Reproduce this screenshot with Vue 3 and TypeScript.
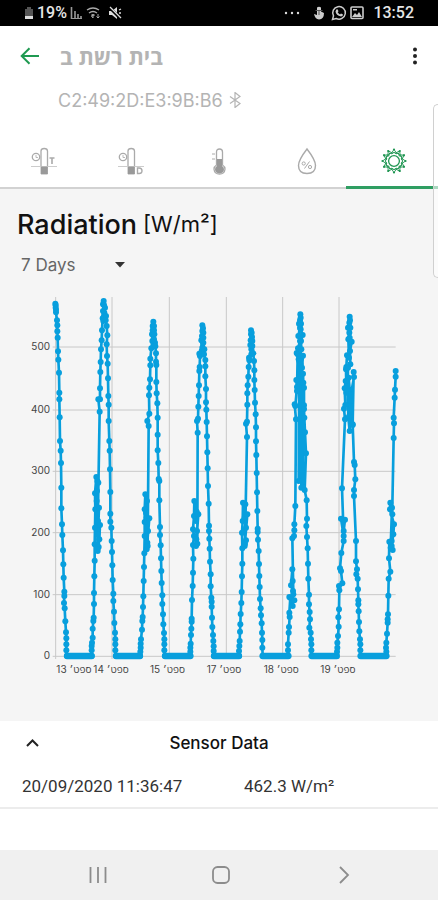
<script setup lang="ts">
import { ref } from 'vue'

type Point = [number, number]

const range = ref('7 Days')
const expanded = ref(true)

const yTicks = [
  { label: '500', y: 168 },
  { label: '400', y: 357 },
  { label: '300', y: 541 },
  { label: '200', y: 725 },
  { label: '100', y: 911 },
  { label: '0', y: 1096 },
]

const xGrid = [167, 336, 508, 679, 848, 1017]

const xTicks = [
  { label: '13 ספט׳', x: 169 },
  { label: '14 ספט׳', x: 280 },
  { label: '15 ספט׳', x: 450 },
  { label: '17 ספט׳', x: 620 },
  { label: '18 ספט׳', x: 791 },
  { label: '19 ספט׳', x: 961 },
]

// Each stretch of readings is kept relative to its own origin on the plot.
function trace(ox: number, oy: number, text: string): Point[] {
  return text.split(' ').map((pair) => {
    const [x, y] = pair.split(',').map(Number)
    return [x + ox, y + oy]
  })
}

const points: Point[] = [
  // 13 Sep
  ...trace(60, 0, '106,38 107,43 107,50 108,56 108,64 111,88 112,103 112,121 113,140 114,181 115,206 117,245 118,305 118,325 119,379 120,450 122,479 123,516 124,590'),
  ...trace(60, 570, '124,82 126,130 127,162 129,208 130,250 131,290 133,332 133,345 132,366 134,382 136,421 138,454 139,472 139,490 139,508 141,525'),
  // 14 Sep
  ...trace(60, 570, '215,525 215,508 215,495 216,485 218,470 218,443 220,420 221,410 222,369 222,336 223,286 224,239 224,190 225,140 226,85 225,37 229,-12 232,0 230,60 234,120 233,210 238,175 240,132 236,198 231,30 235,5 232,160 237,80 232,205'),
  ...trace(60, 0, '239,362 235,325 240,325 240,292 241,243 242,213 243,175 245,148 246,118 248,82 250,90 249,60 252,75 249,40 251,30 252,42 255,50 253,65 258,75 257,88 260,105 262,133 260,160 261,195 263,218 264,262 265,315 266,341 266,390 268,450 269,479 270,535'),
  ...trace(60, 570, '271,33 271,98 271,122 274,140 275,180 276,213 277,253 278,297 280,338 280,360 282,392 283,426 285,455 286,475 286,490 286,508 288,525'),
  // 15 Sep
  ...trace(60, 570, '360,525 361,512 362,500 362,488 363,475 366,446 367,420 368,408 369,378 370,346 371,300 372,258 373,217 374,165 374,123 374,85 376,40 381,60 380,110 388,112 380,205 384,150 382,185 378,95 383,195'),
  ...trace(60, 0, '386,405 382,390 388,368 387,313 388,290 390,265 391,223 391,203 394,172 397,150 396,130 398,118 398,105 400,92 402,105 402,118 403,130 402,145 405,155 406,166 408,187 408,212 409,222 409,273 410,307 412,337 413,380 413,431 413,478 415,516 416,564'),
  ...trace(60, 570, '418,0 418,58 420,138 420,162 422,193 423,232 424,270 425,306 427,343 427,369 429,400 430,430 432,456 433,475 433,490 433,508 435,525'),
  // 16 Sep
  ...trace(60, 570, '511,525 511,512 511,500 512,488 513,462 514,443 515,422 515,413 516,357 518,315 519,275 520,233 519,192 522,165 519,145 522,105 523,60 530,92 528,120 535,100 528,195 531,150 529,175 532,188'),
  ...trace(450, 0, '143,425 141,390 144,383 145,347 146,315 147,283 148,240 149,228 150,195 148,188 155,180 154,148 157,170 156,135 157,120 157,103 159,112 160,125 160,140 160,155 163,175 162,190 166,207 166,226 166,256 168,294 168,334 169,356 170,393 171,436 172,484 173,532 174,585'),
  ...trace(60, 570, '566,68 567,134 567,150 568,173 569,203 570,242 572,280 572,316 574,350 575,362 575,377 576,410 577,438 579,462 580,480 581,496 581,510 582,525'),
  // 17 Sep
  ...trace(660, 570, '57,525 57,510 58,495 59,480 60,452 61,430 62,399 64,366 65,333 66,286 67,248 67,202 66,155 68,120 69,65 76,70 74,110 82,100 74,195 78,140 72,150 78,178 75,188'),
  ...trace(450, 0, '291,438 288,398 291,392 292,341 292,307 293,283 295,257 296,228 298,208 297,200 304,190 301,162 304,175 302,148 303,130 303,118 305,125 306,138 307,150 307,165 310,187 312,210 313,238 313,267 314,297 315,335 317,370 318,409 318,451 319,492 320,546'),
  ...trace(660, 570, '111,34 112,90 113,143 113,153 114,176 116,210 117,249 118,285 119,318 120,354 122,382 123,403 125,427 126,455 127,477 127,500 128,525'),
  // 18 Sep
  ...trace(660, 570, '205,525 204,508 204,490 206,455 207,438 209,408 208,395 211,350 223,358 208,348 218,375 219,330 213,313 217,265 218,300 220,340 217,172 222,165 223,148 223,130 226,75'),
  ...trace(840, 0, '48,385 44,340 46,345 51,288 49,267 51,300 53,190 50,186 56,205 54,172 60,150 55,135 60,110 57,98 60,88 61,70 62,80 63,98 62,115 68,132 63,150 64,175 61,195 58,210 56,570 62,220 69,194 66,230 64,590 69,248 70,275 68,588 72,290 72,343 72,354 73,380 75,424 78,487 74,597'),
  ...trace(660, 570, '260,58 261,113 259,135 261,168 263,202 264,248 265,293 267,341 267,370 269,393 270,415 268,440 272,455 273,475 274,490 274,508 275,525'),
  // 19 Sep
  ...trace(660, 570, '350,525 351,512 352,500 352,485 354,465 356,437 355,409 357,385 358,328 357,315 367,307 363,270 360,262 364,216 371,180 371,150 375,116 363,113 371,165 366,22'),
  ...trace(840, 0, '195,385 192,353 196,342 194,292 197,270 199,305 198,235 199,228 201,193 207,200 205,145 208,125 204,110 208,95 209,77 210,88 211,110 209,140 215,152 210,180 211,220 204,230 203,300 205,380 209,420 212,330 206,260 208,375 218,402 213,310 222,258 221,243 218,400 222,513 224,522 226,565 222,597'),
  ...trace(660, 570, '402,45 408,180 408,241 411,265 409,280 413,293 414,325 415,358 415,370 416,391 417,423 418,451 420,475 421,490 421,508 422,525'),
  // 20 Sep
  ...trace(660, 570, '499,525 499,512 498,500 499,485 501,458 503,425 503,415 504,400 505,344 506,293 511,272 507,232 508,182 518,207 515,195 520,160 522,130 510,85 511,65 517,100 512,200 516,80 515,180'),
  ...trace(840, 0, '341,441 342,397 341,380 344,320 345,296 347,257 347,240'),
]

const line = points.map((p) => p.join(',')).join(' ')

const nights = [
  [201, 275],
  [348, 420],
  [495, 571],
  [642, 717],
  [788, 865],
  [935, 1010],
  [1082, 1159],
]
</script>

<template>
  <div class="screen">
    <div class="status">
      <div class="group">
        <svg width="10" height="14" viewBox="0 0 10 14"><path d="M3 1h4v2h2v7H1V3h2z" fill="#555" /><path d="M1 10h8v3H1z" fill="#ddd" /></svg>
        <span class="battery">19%</span>
        <svg width="13" height="14" viewBox="0 0 13 14"><path d="M1.500 1v12M5 5v8M8 8v5M11 10v3" stroke="#999" stroke-width="1.600" /><path d="M1 12.500h11" stroke="#999" /></svg>
        <svg width="15" height="14" viewBox="0 0 15 14" fill="none" stroke="#aaa" stroke-width="1.400"><path d="M1 4Q7 0 13 4M3 7Q7 4 11 7M5.500 9.500Q7 8 8.500 9.500" /><path d="M7 9l-1.500 1L7 12zM12 8v4M10.500 10.500L12 12l1.500-1.500" stroke-width="1" /></svg>
        <svg class="mute" width="14" height="14" viewBox="0 0 14 14"><path d="M1 5h3l5-4v12L4 9H1z" fill="#ddd" /><path d="M1 1l12 12" stroke="#000" stroke-width="3" /><path d="M2 1l11 11M11 4l2-1M11 7h2" stroke="#ddd" stroke-width="1.300" /></svg>
      </div>
      <div class="group">
        <svg class="dots" width="16" height="14" viewBox="0 0 16 14" fill="#ddd"><circle cx="2" cy="7" r="1.200" /><circle cx="8" cy="7" r="1.200" /><circle cx="14" cy="7" r="1.200" /></svg>
        <svg class="touch" width="12" height="14" viewBox="0 0 12 14"><path d="M4 1.500q2-1.500 4 0v4l3 1.500q0 6-5 6.500Q2 13 1 8l3 1z" fill="#ccc" /><path d="M2.500 4.500h7M6 4v5" stroke="#555" /></svg>
        <svg width="16" height="16" viewBox="0 0 16 16"><path d="M1.500 14.500l1-3.600A6.300 6.300 0 1 1 5.200 13.500z" fill="none" stroke="#ccc" stroke-width="1.500" /><path d="M5.300 4.500l1.200-.3 1 2-.8 1q.8 1.500 2.300 2.200l1-1 2 1q0 1.800-2 2-5-1-5.500-5z" fill="#ccc" /></svg>
        <svg width="14" height="14" viewBox="0 0 14 14"><rect x="1" y="1" width="12" height="11.500" rx="1" fill="none" stroke="#ccc" stroke-width="1.600" /><path d="M2 11l3-4 2 2 2-3 3 5zM3 3h4v1.500H3z" fill="#ccc" /></svg>
        <span class="clock">13:52</span>
      </div>
    </div>

    <header class="header">
      <div class="title-row">
        <button class="icon-button" aria-label="Back">
          <svg width="20" height="18" viewBox="0 0 20 18" fill="none" stroke="#1f9a51" stroke-width="2"><path d="M19 9H2M9.500 1.200L1.700 9l7.800 7.800" /></svg>
        </button>
        <h1 class="title"><bdi>בית רשת ב</bdi></h1>
        <button class="icon-button menu" aria-label="More">
          <svg width="6" height="18" viewBox="0 0 6 18" fill="#222"><circle cx="3" cy="2.500" r="2" /><circle cx="3" cy="9" r="2" /><circle cx="3" cy="15.500" r="2" /></svg>
        </button>
      </div>
      <p class="address">
        C2:49:2D:E3:9B:B6
        <svg width="12" height="16" viewBox="0 0 12 16" fill="none" stroke="#b4b4b4" stroke-width="1.200"><path d="M1 4.500l10 7-5 4V.500l5 4-10 7" /></svg>
      </p>
      <nav class="tabs">
        <button class="tab" aria-label="Tube temperature">
          <svg width="26" height="28" viewBox="0 0 26 28" fill="none" stroke="#aaa"><circle cx="5" cy="10" r="3.700" stroke-width="1.300" /><path d="M5 8v2.500h2" stroke-width=".800" /><path d="M10 19V4q0-2.500 3.200-2.500T16.500 4v15" stroke-width="1.300" /><path d="M0 19.500h26" stroke="#ccc" /><path d="M10 20h6.500v7H10z" fill="#999" stroke="#999" stroke-width=".800" /><path d="M18.500 11h5M21 11v6" stroke-width="1.600" /></svg>
        </button>
        <button class="tab" aria-label="Tube dew point">
          <svg width="26" height="28" viewBox="0 0 26 28" fill="none" stroke="#aaa"><circle cx="5" cy="10" r="3.700" stroke-width="1.300" /><path d="M5 8v2.500h2" stroke-width=".800" /><path d="M10 19V4q0-2.500 3.200-2.500T16.500 4v15" stroke-width="1.300" /><path d="M0 19.500h26" stroke="#ccc" /><path d="M10 20h6.500v7H10z" fill="#999" stroke="#999" stroke-width=".800" /><path d="M19.500 21h1.500q3 0 3 2.800t-3 2.700h-1.500z" stroke-width="1.400" /></svg>
        </button>
        <button class="tab" aria-label="Temperature">
          <svg width="16" height="28" viewBox="0 0 16 28" fill="none" stroke="#aaa" stroke-width="1.300"><path d="M5.500 18V5q0-3 3-3t3 3v13q2.500 1.500 2.500 4.200Q13.500 27 8.500 27T3 22.200Q3 19.500 5.500 18z" /><path d="M6 12h5v7q2 1 2 3.200 0 4-4.500 4T4 22.200Q4 20 6 19z" fill="#999" stroke="none" /><path d="M1 7h3M1 12h3" stroke-width="1" /></svg>
        </button>
        <button class="tab" aria-label="Humidity">
          <svg width="20" height="28" viewBox="0 0 20 28" fill="none" stroke="#aaa"><path d="M10 2Q1.500 13 1.500 18.500 1.500 26.500 10 26.500t8.500-8Q18.500 13 10 2z" stroke-width="1.400" /><circle cx="6.700" cy="16.500" r="1.600" /><circle cx="13" cy="20" r="1.600" /><path d="M12.500 14.500l-5 7" /></svg>
        </button>
        <button class="tab active" aria-label="Radiation">
          <svg width="26" height="28" viewBox="-13 -14 26 28" fill="none" stroke="#219653">
            <circle r="5.400" stroke-width="1.300" />
            <g v-for="n in 12" :key="n" :transform="`rotate(${n * 30})`">
              <path d="M-3.200-7L0-11.500 3.200-7M-1.900-7.200L0-9 1.900-7.200" stroke-width=".900" />
              <circle cy="-11.500" r="1.100" fill="#219653" stroke="none" />
            </g>
          </svg>
        </button>
      </nav>
    </header>

    <main class="content">
      <h2 class="heading">Radiation <span class="unit">[W/m²]</span></h2>
      <div class="range">
        <select v-model="range" aria-label="Time range">
          <option>7 Days</option>
          <option>30 Days</option>
        </select>
        <svg width="10" height="6" viewBox="0 0 10 6"><path d="M0 0h10L5 5.500z" fill="#333" /></svg>
      </div>
      <svg class="chart" viewBox="0 0 1314 1170" role="img" aria-label="Radiation over time">
        <g stroke="#c8c8c8" stroke-width="3">
          <line v-for="t in yTicks" :key="t.label" x1="158" x2="1187" :y1="t.y" :y2="t.y" />
          <line v-for="x in xGrid" :key="x" :x1="x" :x2="x" y1="18" y2="1104" />
        </g>
        <g class="tick" text-anchor="end">
          <text v-for="t in yTicks" :key="t.label" x="150" :y="t.y + 9">{{ t.label }}</text>
        </g>
        <g class="tick">
          <text v-for="t in xTicks" :key="t.label" :x="t.x" y="1145">{{ t.label }}</text>
        </g>
        <polyline :points="line" fill="none" stroke="#089fdd" stroke-width="8" stroke-linejoin="round" />
        <g stroke="#089fdd" stroke-width="19" stroke-linecap="round">
          <line v-for="n in nights" :key="n[0]" :x1="n[0]" :x2="n[1]" y1="1095" y2="1095" />
        </g>
        <g fill="#089fdd">
          <circle v-for="(p, i) in points" :key="i" :cx="p[0]" :cy="p[1]" r="9" />
        </g>
      </svg>
    </main>

    <section class="sensor">
      <div class="sensor-head">
        <button class="icon-button" aria-label="Toggle sensor data" @click="expanded = !expanded">
          <svg width="13" height="8" viewBox="0 0 13 8" fill="none" stroke="#222" stroke-width="2"><path d="M1 7l5.500-5.500L12 7" /></svg>
        </button>
        <h3>Sensor Data</h3>
      </div>
      <table v-if="expanded">
        <tbody>
          <tr>
            <td>20/09/2020 11:36:47</td>
            <td>462.3 W/m²</td>
          </tr>
        </tbody>
      </table>
    </section>

    <nav class="system">
      <button class="icon-button" aria-label="Recents">
        <svg width="18" height="18" viewBox="0 0 18 18" stroke="#8c8c8c" stroke-width="1.800"><path d="M1.500 1v16M9 1v16M16.500 1v16" /></svg>
      </button>
      <button class="icon-button" aria-label="Home">
        <svg width="18" height="18" viewBox="0 0 18 18" fill="none" stroke="#8c8c8c" stroke-width="1.800"><rect x="1" y="1" width="16" height="16" rx="4.500" /></svg>
      </button>
      <button class="icon-button" aria-label="Back">
        <svg width="18" height="18" viewBox="0 0 18 18" fill="none" stroke="#8c8c8c" stroke-width="1.800"><path d="M5 1l8 8-8 8" /></svg>
      </button>
    </nav>
    <div class="edge-panel"></div>
  </div>
</template>

<style>
body {
  margin: 0;
}
</style>

<style scoped>
.screen {
  position: relative;
  display: flex;
  flex-direction: column;
  min-height: 100vh;
  overflow: hidden;
  background: #fff;
  color: #111;
  font-family: Inter, "Liberation Sans", sans-serif;
}
button {
  padding: 0;
  border: 0;
  background: none;
}
svg {
  display: block;
  flex: none;
}
h1, h2, h3, p {
  margin: 0;
  font-weight: 500;
}
.status {
  display: flex;
  justify-content: space-between;
  align-items: center;
  height: 26px;
  padding: 0 24px;
  background: #000;
  color: #e6e6e6;
  font: 500 16px/20px Roboto, sans-serif;
}
.group {
  display: flex;
  align-items: center;
  gap: 3px;
}
.mute {
  margin-left: 4px;
}
.dots {
  margin-right: 10px;
}
.touch {
  margin-right: 3px;
}
.group svg + .clock {
  margin-left: 6px;
}
.header {
  background: #fff;
  border-bottom: 2px solid #d2d2d2;
}
.title-row {
  display: flex;
  align-items: center;
  height: 60px;
  padding: 0 20px;
}
.icon-button {
  display: grid;
  place-items: center;
}
.title {
  flex: 1;
  margin-left: 20px;
  color: #b4b4b4;
  font: 700 22px/28px "Open Sans", "Liberation Sans", sans-serif;
  text-align: left;
}
.address {
  display: flex;
  align-items: center;
  gap: 6px;
  padding-left: 58px;
  height: 28px;
  color: #b4b4b4;
  font-size: 18px;
  font-weight: 400;
}
.tabs {
  display: grid;
  grid-template-columns: repeat(5, 1fr);
  height: 73px;
}
.tab {
  display: flex;
  justify-content: center;
  align-items: center;
  padding-top: 22px;
  box-sizing: border-box;
  height: 75px;
  border-bottom: 3px solid transparent;
}
.tab.active {
  margin: 0 -4px;
  border-color: #2f9e62;
}
.content {
  flex: 1;
  background: #f5f5f5;
}
.heading {
  display: flex;
  align-items: center;
  gap: 6px;
  padding: 17px 17px 0;
  font-size: 27px;
  line-height: 36px;
}
.unit {
  padding-bottom: 2px;
  font-size: 22px;
  font-weight: 400;
}
.range {
  display: inline-grid;
  align-items: center;
  margin-left: 21px;
  margin-top: 8px;
}
.range select,
.range svg {
  grid-area: 1 / 1;
}
.range svg {
  justify-self: end;
  pointer-events: none;
}
.range select {
  width: 104px;
  height: 26px;
  padding: 0;
  border: 0;
  background: none;
  appearance: none;
  color: #666;
  font: 400 17px/26px Inter, sans-serif;
}
.chart {
  width: 100%;
  height: auto;
  margin-top: 13px;
}
.tick {
  fill: #444;
  font-family: Inter, "Open Sans", "Liberation Sans", sans-serif;
  font-size: 30px;
}
.sensor {
  background: #fff;
  border-bottom: 2px solid #ececec;
}
.sensor-head {
  display: grid;
  grid-template-columns: 26px 1fr 26px;
  align-items: center;
  height: 44px;
  padding: 0 19px;
}
.sensor-head h3 {
  font-size: 17px;
  line-height: 24px;
  text-align: center;
}
table {
  width: 100%;
  border-collapse: collapse;
  table-layout: fixed;
}
td {
  height: 42px;
  padding: 0 0 0 22px;
  color: #333;
  font: 400 17px/24px Roboto, sans-serif;
}
td + td {
  padding-left: 25px;
}
.system {
  display: grid;
  grid-template-columns: repeat(3, 123px);
  justify-content: center;
  height: 50px;
  margin-top: 41px;
  padding-left: 3px;
  background: #f0f0f0;
}
.edge-panel {
  position: absolute;
  top: 104px;
  right: 0;
  width: 4px;
  height: 172px;
  border: 1px solid #d0d0d0;
  border-right: 0;
  border-radius: 5px 0 0 5px;
  background: rgba(255, 255, 255, 0.6);
}
</style>
